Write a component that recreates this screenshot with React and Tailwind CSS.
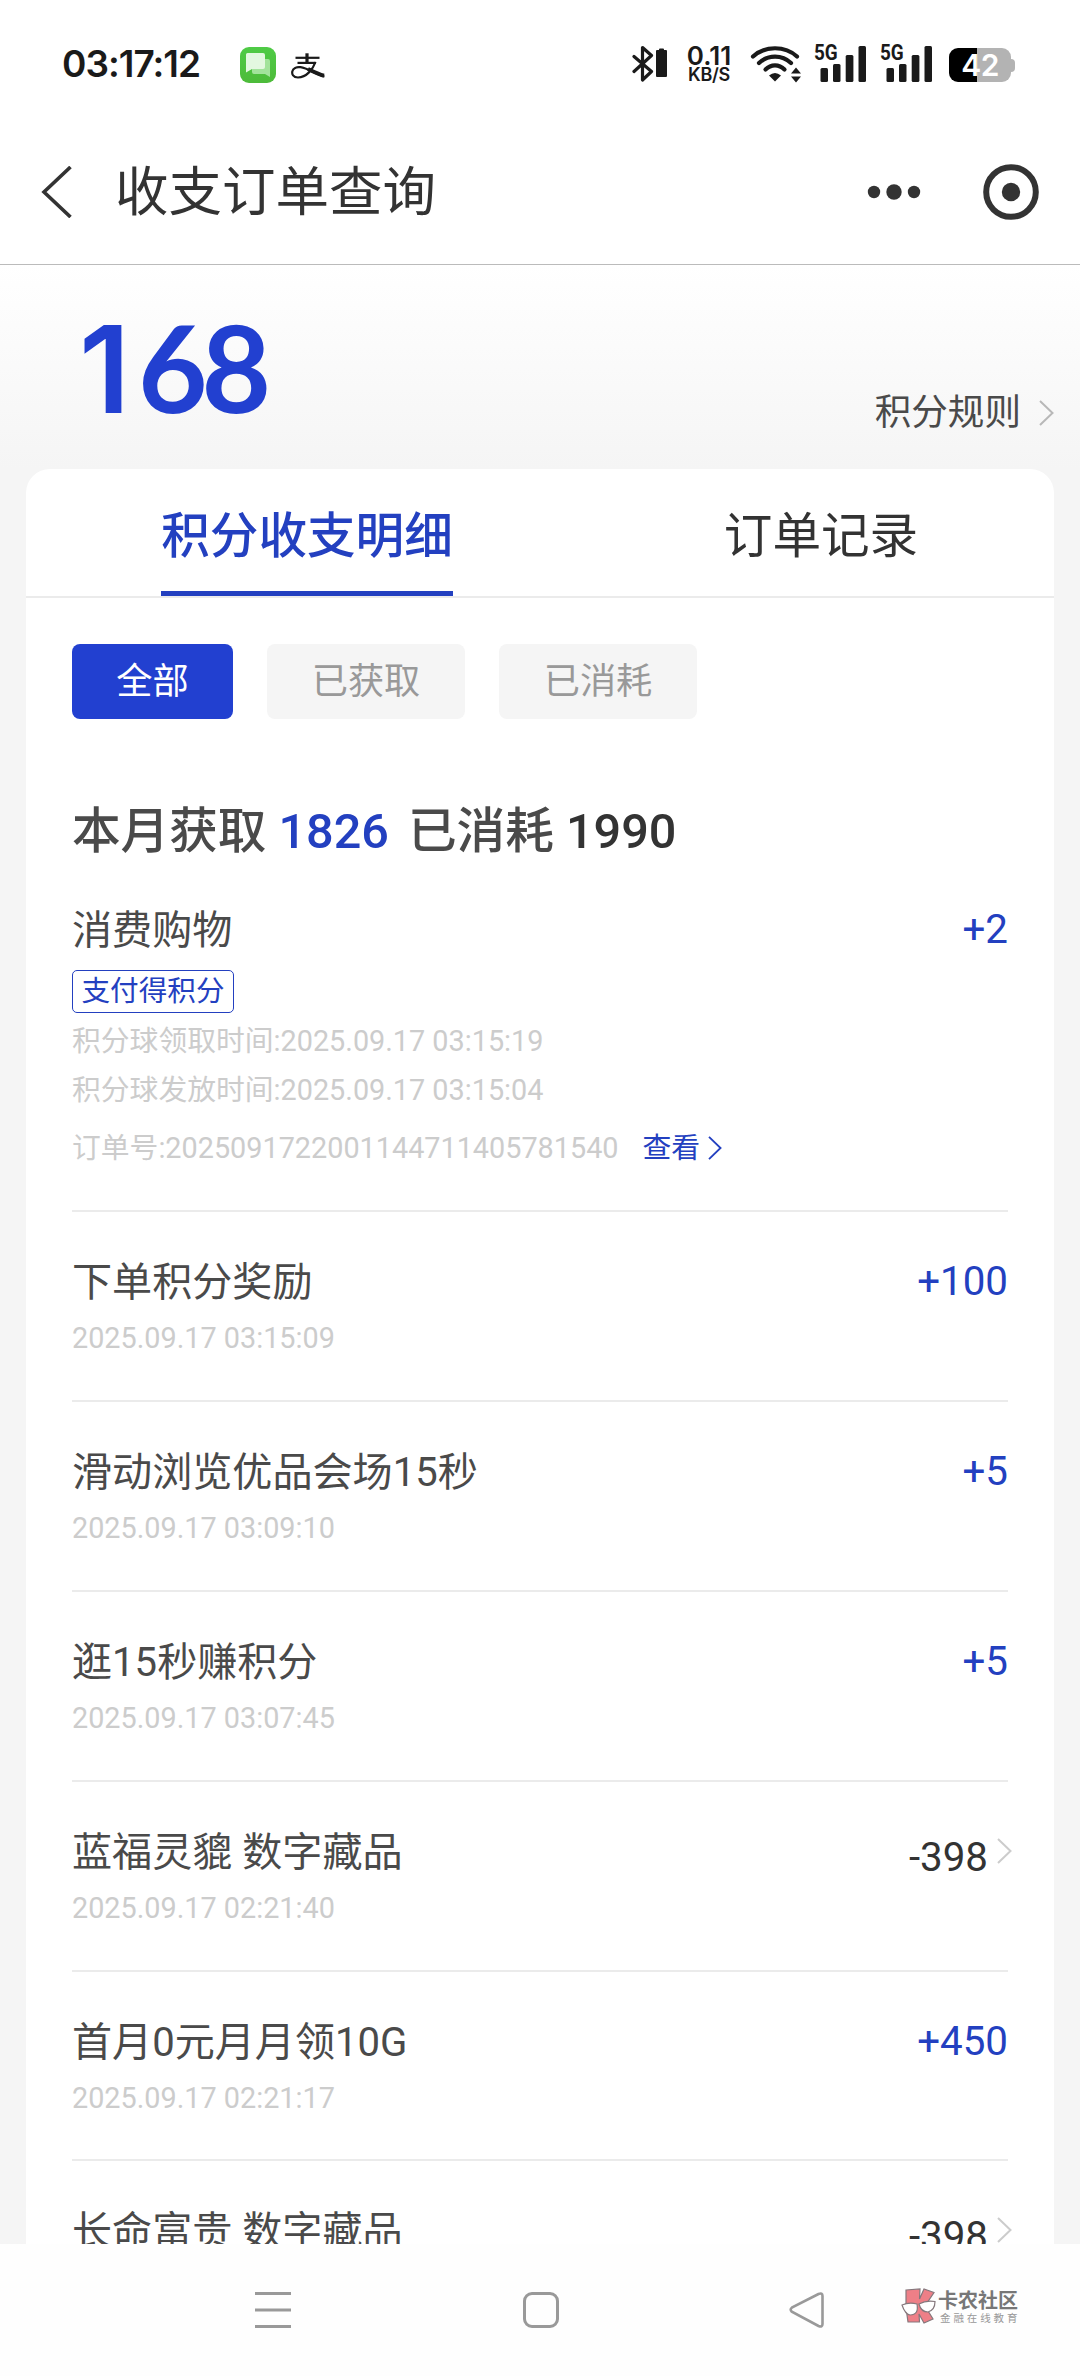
import React from "react";

const INK = "#1a1a1a";

function Chevron({ className }) {
  return (
    <svg className={className} viewBox="0 0 15 26" fill="none" stroke="currentColor" strokeWidth="2">
      <path d="M1 1 L13.5 13 L1 25" />
    </svg>
  );
}

function Signal() {
  return (
    <div className="relative h-[37px] w-[51px]">
      <span className="absolute -left-px -top-px origin-left scale-x-[0.86] font-['Roboto'] text-[22px] leading-[18px] font-bold">
        5G
      </span>
      <svg className="absolute left-0 top-0" width="52" height="37" fill={INK}>
        <rect x="5.5" y="23" width="7.5" height="14" rx="1.5" />
        <rect x="18" y="19" width="7.5" height="18" rx="1.5" />
        <rect x="30.7" y="10" width="7.7" height="27" rx="1.5" />
        <rect x="43.5" y="1" width="7.5" height="36" rx="1.5" />
      </svg>
    </div>
  );
}

function StatusBar() {
  return (
    <div className="flex h-[128px] items-start bg-white text-[#1a1a1a]">
      <div className="ml-[62px] mt-[42px] w-[178px] font-['Inter'] text-[37px] leading-[44px] font-semibold tracking-[-1px] whitespace-nowrap">
        03:17:12
      </div>
      <svg className="mt-[47px]" width="36" height="36" viewBox="0 0 36 36">
        <defs>
          <linearGradient id="msg" x1="0" y1="0" x2="0" y2="1">
            <stop offset="0" stopColor="#4fcb46" />
            <stop offset="1" stopColor="#4dbb3a" />
          </linearGradient>
        </defs>
        <rect width="36" height="36" rx="9" fill="url(#msg)" />
        <path d="M14 12 H28 Q30 12 30 14 V30 L25 27 H14 Q12 27 12 25 V12 Z" fill="#a2e39b" />
        <path d="M7.5 6 H23 Q25 6 25 8 V20 Q25 22 23 22 H12 L6 25.5 V7.5 Q6 6 7.5 6 Z" fill="#e3f8e0" />
      </svg>
      <svg className="ml-[15px] mt-[53px]" width="34" height="26" viewBox="0 0 34 26" fill="none" stroke={INK}>
        <path d="M4.5 4.8 H28.5" strokeWidth="2.2" />
        <path d="M16 0.3 V10.5" strokeWidth="3.2" />
        <path d="M6.5 9.9 H25" strokeWidth="2.2" />
        <path d="M24.5 9 C22 16 15.500 24.500 7 24.500 C2 24.500 0.8 21 1.300 18.500 C2 15.500 5.500 13.700 9.500 14.200 C17 15.300 24 21 33.500 23.500" strokeWidth="2.2" />
        <path d="M17 16 C22 18.500 28 21.500 33 22.800" strokeWidth="4" />
      </svg>

      <div className="ml-auto mr-[65px] mt-[45px] flex h-[38px] items-start">
        <svg width="36" height="38" viewBox="0 0 36 38" fill="none" stroke={INK} strokeWidth="3.2" strokeLinejoin="round" strokeLinecap="round">
          <path d="M2 11.500 L19.500 26.500 L10.500 35 V2.500 L19.500 10.500 L2 26.500" />
          <path d="M25.500 6 h3 v-1.500 h3 v1.500 h3 v25 h-9 z" fill={INK} strokeWidth="2" transform="translate(-0.500 0)" />
        </svg>
        <div className="ml-[18px] mr-[2px] flex w-[46px] flex-col items-center font-['Inter'] whitespace-nowrap">
          <span className="text-[26px] leading-[21px] font-semibold">0.11</span>
          <span className="text-[18px] leading-[18px] font-semibold tracking-[-0.3px]">KB/S</span>
        </div>
        <svg className="ml-[16px]" width="52" height="38" viewBox="0 0 52 38" fill="none" stroke={INK} strokeWidth="4.2" strokeLinecap="round">
          <path d="M3 11.500 C15 0.500 35 0.500 47 11.500" />
          <path d="M9 18 C18 9.500 32 9.500 41 18" />
          <path d="M15.500 24.500 C21 19 29 19 34.500 24.500" />
          <path d="M19 30.500 Q25 25.500 31 30.500 L25 36.500 Z" fill={INK} stroke="none" />
          <path d="M41 28.500 H51 L46 22.500 Z M41 31.500 H51 L46 37.500 Z" fill={INK} stroke="none" />
        </svg>
        <div className="ml-[13px]"><Signal /></div>
        <div className="ml-[15px]"><Signal /></div>
        <div className="ml-[17px] mt-[3px] flex items-center">
          <div className="flex h-[34px] w-[62px] items-center justify-center rounded-[9px] bg-[linear-gradient(90deg,#000_28px,#b3b3b3_28px)] font-['Inter'] text-[30px] font-semibold leading-[34px] tracking-[-0.5px] text-white">
            42
          </div>
          <div className="h-[13px] w-[4px] rounded-r-[4px] bg-[#b3b3b3]" />
        </div>
      </div>
    </div>
  );
}

function Header() {
  return (
    <header className="flex h-[137px] items-center border-b border-[#bbbbbb] bg-white pb-[8px] text-[#333333]">
      <svg className="ml-[41px]" width="32" height="52" viewBox="0 0 32 52" fill="none" stroke="currentColor" strokeWidth="3.6">
        <path d="M29.500 1 L3 26 L29.500 51" />
      </svg>
      <h1 className="ml-[42px] mt-[2px] text-[53.5px] leading-[64px]">收支订单查询</h1>
      <svg className="ml-auto" width="54" height="16" fill="currentColor">
        <circle cx="7" cy="8" r="6.2" />
        <circle cx="27" cy="8" r="7.700" />
        <circle cx="47" cy="8" r="6.200" />
      </svg>
      <svg className="ml-[62px] mr-[40px]" width="57" height="56" viewBox="0 0 57 56" fill="none">
        <circle cx="28" cy="28" r="24.800" stroke="currentColor" strokeWidth="6" />
        <circle cx="28" cy="28" r="9.200" fill="currentColor" />
      </svg>
    </header>
  );
}

const rows = [
  { title: "下单积分奖励", date: "2025.09.17 03:15:09", amount: "+100" },
  { title: "滑动浏览优品会场15秒", date: "2025.09.17 03:09:10", amount: "+5" },
  { title: "逛15秒赚积分", date: "2025.09.17 03:07:45", amount: "+5" },
  { title: "蓝福灵貔 数字藏品", date: "2025.09.17 02:21:40", amount: "-398", spent: true },
  { title: "首月0元月月领10G", date: "2025.09.17 02:21:17", amount: "+450" },
  { title: "长命富贵 数字藏品", amount: "-398", spent: true },
];

function Row({ row }) {
  return (
    <li className="flex h-[189.9px] justify-between border-b-2 border-[#ebebeb] pt-[46px]">
      <div>
        <div className="text-[40.1px] leading-[49px] text-[#4a4a4a]">{row.title}</div>
        {row.date && <div className="mt-[13px] text-[28.8px] leading-[36px] text-[#cccccc]">{row.date}</div>}
      </div>
      {row.spent ? (
        <div className="-mr-[4px] flex items-start text-[#333333]">
          <span className="mt-[6px] text-[40.3px] leading-[48px]">{row.amount}</span>
          <Chevron className="ml-[9px] mt-[10px] h-[26px] w-[15px] text-[#cccccc]" />
        </div>
      ) : (
        <span className="text-[40.3px] leading-[48px] text-[#2340c0]">{row.amount}</span>
      )}
    </li>
  );
}

function NavBar() {
  return (
    <nav className="flex h-[132px] bg-[#fefefe] pt-[44px] text-[#999999]">
      <svg className="ml-[255px] mt-[4px]" width="36" height="36" stroke="currentColor" strokeWidth="3">
        <path d="M0 1.500 H36 M0 18 H36 M0 34.500 H36" />
      </svg>
      <svg className="ml-[232px] mt-[4px]" width="36" height="36" fill="none" stroke="currentColor" strokeWidth="3">
        <rect x="1.500" y="1.500" width="33" height="33" rx="7.500" />
      </svg>
      <svg className="ml-[230px] mt-[4px]" width="36" height="36" fill="none" stroke="currentColor" strokeWidth="2.600">
        <path d="M2.800 15.700 Q0.500 17.500 2.800 19.700 L29.500 34 Q33.500 35.500 33.500 32 V4 Q33.500 0.500 29.500 2 Z" />
      </svg>
      <div className="ml-[76px] flex">
        <svg width="36" height="38" viewBox="0 0 36 38" fill="#ee7f87" stroke="#85777c" strokeWidth="1.200">
          <path d="M5 2 L19 1 L18.500 11 L23 1 L33 4.500 L24 18 L32 31 L23 35 L18 26 L18.500 34 L7 34 L5 20 Z" />
          <path d="M1 17 Q8 14 16 16 Q18 27 9 27 Q4 26 1 17 Z" fill="#fff" />
          <path d="M18 16 Q25 12 34 13.500 Q34 22 27 24 Q20 24 18 16 Z" fill="#fff" />
        </svg>
        <div className="ml-px mt-[3px] flex flex-col whitespace-nowrap">
          <span className="text-[20px] font-bold leading-[20px] text-[#777777]">卡农社区</span>
          <span className="ml-[2px] mt-px text-[10.500px] leading-[14px] tracking-[2.9px] text-[#999999]">金融在线教育</span>
        </div>
      </div>
    </nav>
  );
}

export default function App() {
  return (
    <div className="flex h-[2376px] w-[1080px] flex-col overflow-hidden bg-[#f5f5f5] font-['Roboto','Noto_Sans_CJK_SC',sans-serif]">
      <StatusBar />
      <Header />
      <main className="flex h-[1979px] flex-col overflow-hidden">
        <section className="flex h-[204px] shrink-0 justify-between bg-linear-to-b from-white to-[#f5f5f5]">
          <div className="ml-[79px] mt-[42px] flex items-baseline text-[121px] leading-[120px] text-[#2240d0]">
            <span className="w-[59px] font-['Inter'] font-semibold">1</span>
            <span className="font-['Lato'] text-[120px] font-bold tracking-[-6px]">68</span>
          </div>
          <div className="mr-[26px] mt-[125px] flex h-[46px] items-center text-[#4a4a4a]">
            <span className="text-[36.600px] leading-[46px]">积分规则</span>
            <Chevron className="ml-[18px] h-[26px] w-[15px] text-[#b8b8b8]" />
          </div>
        </section>

        <section className="mx-[26px] h-[1900px] shrink-0 rounded-t-[24px] bg-white">
          <div className="flex h-[129px] border-b-2 border-[#ebebeb] text-[48.6px] leading-[60px]">
            <div className="flex flex-1 justify-center pl-[48px]">
              <div className="h-[127px] border-b-5 border-[#2340c0] pt-[38px] font-medium text-[#2340c0]">积分收支明细</div>
            </div>
            <div className="flex flex-1 justify-center pl-[48px] pt-[38px] text-[#333333]">订单记录</div>
          </div>

          <div className="flex flex-col px-[46px]">
            <div className="mt-[46px] flex h-[75px] gap-[34px] text-[36.200px] leading-[75px]">
              <button className="w-[161px] rounded-[8px] bg-[#2240d0] text-white">全部</button>
              <button className="w-[198px] rounded-[8px] bg-[#f5f5f5] text-[#999999]">已获取</button>
              <button className="w-[198px] rounded-[8px] bg-[#f5f5f5] text-[#999999]">已消耗</button>
            </div>

            <h2 className="mt-[83px] text-[48.6px] font-medium leading-[60px] whitespace-pre text-[#4a4a4a]">
              本月获取 <span className="text-[#2340c0]">1826</span> <span className="ml-[7px]">已消耗</span> <span className="text-[#333333]">1990</span>
            </h2>

            <div className="mt-[44px] flex h-[306px] justify-between border-b-2 border-[#ebebeb]">
              <div className="flex flex-col items-start text-[28.8px] leading-[36px] text-[#cccccc]">
                <div className="text-[40.1px] leading-[49px] text-[#4a4a4a]">消费购物</div>
                <div className="mt-[15px] h-[43px] w-[162px] rounded-[5px] border border-[#2340c0] text-center text-[28.6px] leading-[41px] text-[#2340c0]">
                  支付得积分
                </div>
                <div className="mt-[10px]">积分球领取时间:2025.09.17 03:15:19</div>
                <div className="mt-[13px]">积分球发放时间:2025.09.17 03:15:04</div>
                <div className="mt-[22px] flex items-center">
                  <span>订单号:2025091722001144711405781540</span>
                  <span className="ml-[24px] text-[#2340c0]">查看</span>
                  <Chevron className="ml-[8px] h-[24px] w-[14px] text-[#2340c0]" />
                </div>
              </div>
              <span className="text-[40.3px] leading-[48px] text-[#2340c0]">+2</span>
            </div>

            <ul>
              {rows.map((row) => (
                <Row key={row.title} row={row} />
              ))}
            </ul>
          </div>
        </section>
      </main>
      <NavBar />
    </div>
  );
}
